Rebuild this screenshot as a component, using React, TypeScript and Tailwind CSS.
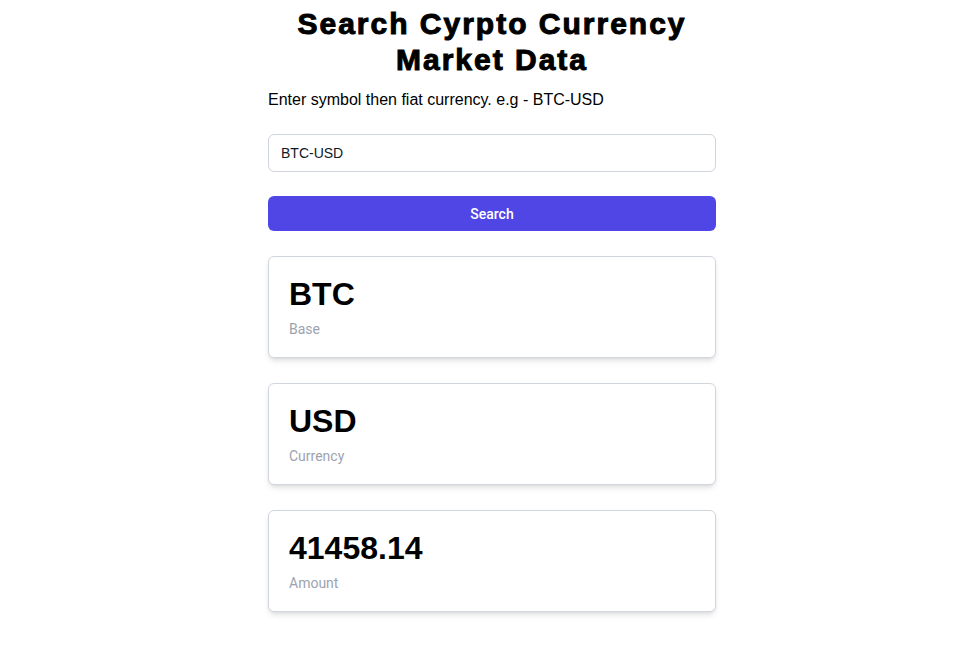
import { useState } from 'react'

interface Quote {
  value: string
  label: string
}

const quotes: Quote[] = [
  { value: 'BTC', label: 'Base' },
  { value: 'USD', label: 'Currency' },
  { value: '41458.14', label: 'Amount' },
]

export default function App() {
  const [symbol, setSymbol] = useState('BTC-USD')

  return (
    <div className="min-h-screen bg-white pl-4 font-['Liberation_Sans',Arial,sans-serif] text-black">
      <div className="mx-auto w-[448px] pt-1.5">
        {/* Heading */}
        <h1 className="-mx-10 text-center text-[30px] leading-9 font-bold tracking-[2px] [-webkit-text-stroke:1px_black]">
          Search Cyrpto Currency
          <br />
          Market Data
        </h1>
        <p className="mt-[10px] text-base leading-6">Enter symbol then fiat currency. e.g - BTC-USD</p>

        {/* Search form */}
        <input
          type="text"
          value={symbol}
          onChange={(e) => setSymbol(e.target.value)}
          className="mt-[22px] block h-[38px] w-full rounded-md border border-gray-300 px-3 text-sm text-gray-900 focus:outline-none"
        />
        <button className="mt-6 block h-[35px] w-full rounded-md bg-[#4f46e5] font-['Roboto',sans-serif] text-sm font-medium text-white">
          Search
        </button>

        {/* Results */}
        <div className="mt-[25px] flex flex-col gap-[25px]">
          {quotes.map((q) => (
            <div
              key={q.label}
              className="h-[102px] rounded-md border border-gray-300 bg-white px-5 pt-[19px] shadow-md"
            >
              <div className="text-[32px] leading-9 font-bold">{q.value}</div>
              <div className="mt-[7px] font-['Roboto',sans-serif] text-sm leading-5 text-[#9ca3af]">
                {q.label}
              </div>
            </div>
          ))}
        </div>
      </div>
    </div>
  )
}
